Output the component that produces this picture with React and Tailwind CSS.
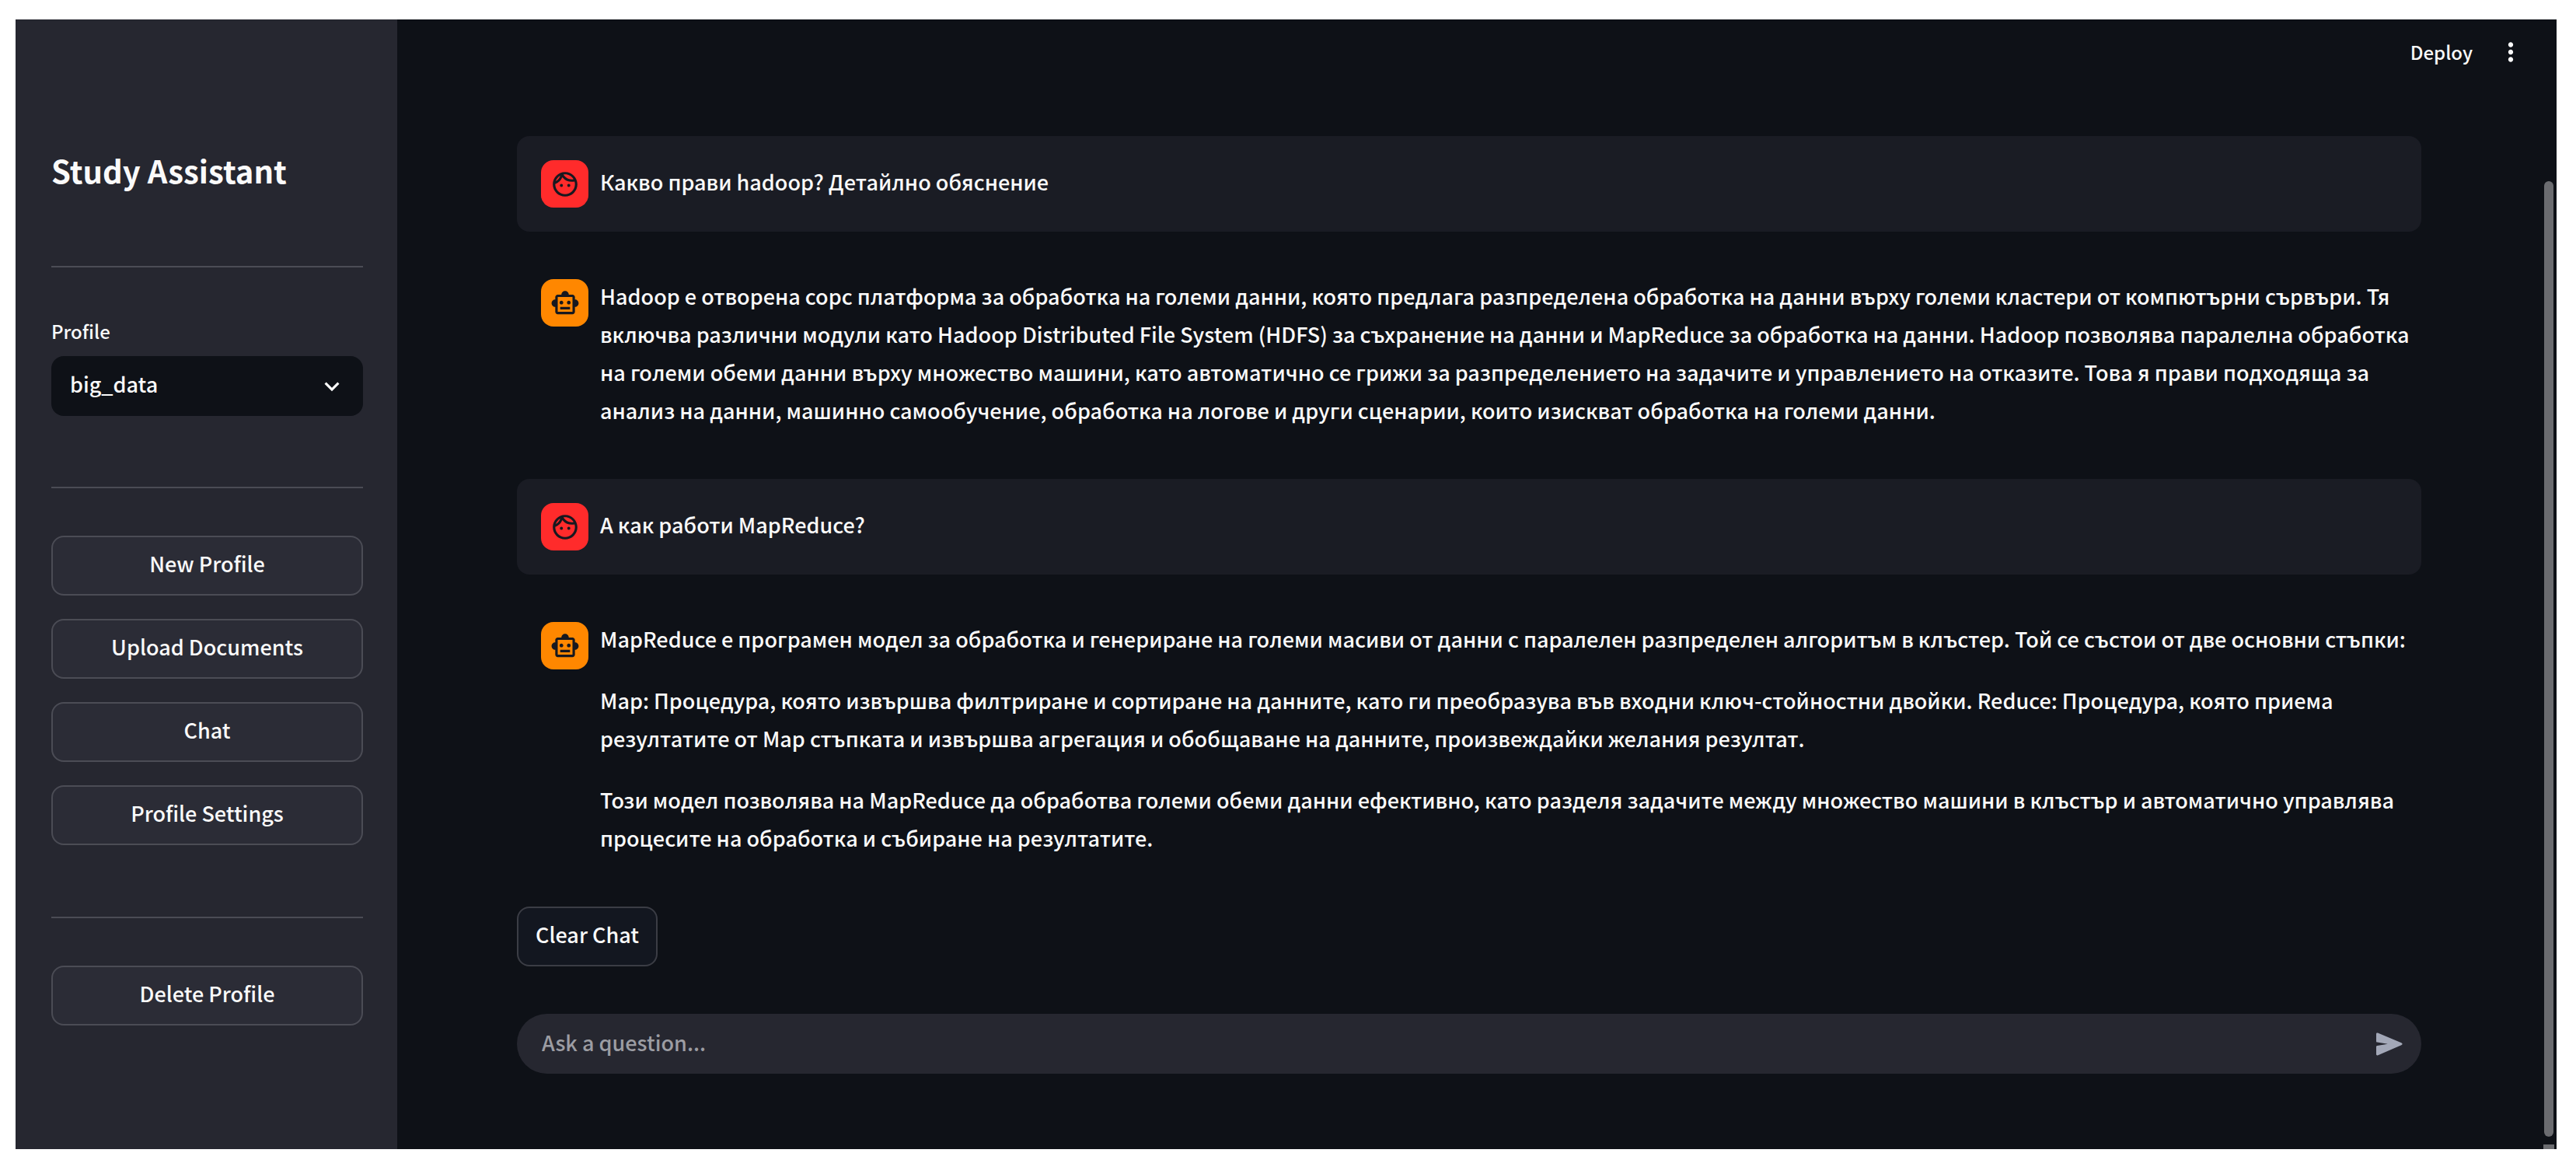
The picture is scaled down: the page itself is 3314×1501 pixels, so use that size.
import React, { useState } from 'react';
import {
  MdKeyboardArrowDown,
  MdMoreVert,
  MdOutlineFace,
  MdOutlineSmartToy,
} from 'react-icons/md';

const messages = [
  {
    role: 'user',
    paragraphs: ['Какво прави hadoop? Детайлно обяснение'],
  },
  {
    role: 'assistant',
    paragraphs: [
      'Hadoop е отворена сорс платформа за обработка на големи данни, която предлага разпределена обработка на данни върху големи кластери от компютърни сървъри. Тя включва различни модули като Hadoop Distributed File System (HDFS) за съхранение на данни и MapReduce за обработка на данни. Hadoop позволява паралелна обработка на големи обеми данни върху множество машини, като автоматично се грижи за разпределението на задачите и управлението на отказите. Това я прави подходяща за анализ на данни, машинно самообучение, обработка на логове и други сценарии, които изискват обработка на големи данни.',
    ],
  },
  {
    role: 'user',
    paragraphs: ['А как работи MapReduce?'],
  },
  {
    role: 'assistant',
    paragraphs: [
      'MapReduce е програмен модел за обработка и генериране на големи масиви от данни с паралелен разпределен алгоритъм в клъстер. Той се състои от две основни стъпки:',
      'Map: Процедура, която извършва филтриране и сортиране на данните, като ги преобразува във входни ключ-стойностни двойки. Reduce: Процедура, която приема резултатите от Map стъпката и извършва агрегация и обобщаване на данните, произвеждайки желания резултат.',
      'Този модел позволява на MapReduce да обработва големи обеми данни ефективно, като разделя задачите между множество машини в клъстър и автоматично управлява процесите на обработка и събиране на резултатите.',
    ],
  },
];

const pages = ['New Profile', 'Upload Documents', 'Chat', 'Profile Settings'];

const SidebarButton = ({ children }) => (
  <button
    type="button"
    className="h-[77px] w-full rounded-2xl border-2 border-[#4b4c55] bg-[#2b2c36] pb-1 text-[27px] font-medium hover:border-[#ff4b4b]"
  >
    {children}
  </button>
);

const Avatar = ({ role }) => {
  const isUser = role === 'user';
  return (
    <div
      className={`flex size-[61px] shrink-0 items-center justify-center rounded-2xl text-[#17181f] ${
        isUser ? 'bg-[#ff2b2b]' : 'bg-[#ff8700]'
      }`}
    >
      {isUser ? <MdOutlineFace size={38} /> : <MdOutlineSmartToy size={38} />}
    </div>
  );
};

const ChatMessage = ({ role, paragraphs }) => (
  <article
    className={`flex items-start gap-[15px] rounded-2xl pt-7 pr-1 pb-[31px] pl-[31px] ${
      role === 'user' ? 'bg-[#1a1c24]' : ''
    }`}
  >
    <div className="pt-[3px]">
      <Avatar role={role} />
    </div>
    <div className="flex min-h-[64px] min-w-0 flex-1 flex-col justify-center gap-[30px] pb-[3px] text-[27px] leading-[49px] font-medium">
      {paragraphs.map((text) => (
        <p key={text}>{text}</p>
      ))}
    </div>
  </article>
);

const SendIcon = () => (
  <svg width="34" height="30" viewBox="0 0 34 30" fill="currentColor" aria-hidden="true">
    <path d="M0 1.8C0 .6 1 .2 2 .5L32.300 13.200c1.800.8 1.800 2.300 0 3.100L2.300 29.200C1 29.700 0 29.200 0 28V18.300c0-.9.4-1.200 1.300-1.400L14.700 14.800 1.300 12.600C.4 12.400 0 12.100 0 11.200Z" />
  </svg>
);

const Divider = () => <hr className="border-t-2 border-[#4b4c55]" />;

const App = () => {
  const [profile, setProfile] = useState('big_data');
  const [question, setQuestion] = useState('');

  return (
    <div className="min-h-screen bg-white pt-[25px] pr-[25px] pb-[21px] pl-5 font-['Noto_Sans_CJK_JP',sans-serif] text-[#fafafa]">
      <div className="flex bg-[#0e1117]">
        {/* Sidebar */}
        <aside className="w-[491px] shrink-0 bg-[#262730] pr-11 pl-[46px]">
          <h1 className="pt-[164px] text-[40px] leading-[60px] font-bold">Study Assistant</h1>
          <div className="pt-[93px]">
            <Divider />
          </div>

          <div className="pt-[59px]">
            <label htmlFor="profile" className="block text-2xl leading-[46px] font-medium">
              Profile
            </label>
            <div className="relative mt-[9px]">
              <select
                id="profile"
                value={profile}
                onChange={(e) => setProfile(e.target.value)}
                className="block h-[77px] w-full appearance-none rounded-2xl bg-[#0e1117] px-6 pb-1 text-[27px] font-medium"
              >
                <option value="big_data">big_data</option>
              </select>
              <MdKeyboardArrowDown
                size={38}
                className="pointer-events-none absolute top-5 right-[21px]"
              />
            </div>
          </div>

          <div className="pt-[91px]">
            <Divider />
          </div>
          <nav className="flex flex-col gap-[30px] pt-[61px]">
            {pages.map((page) => (
              <SidebarButton key={page}>{page}</SidebarButton>
            ))}
          </nav>

          <div className="pt-[92px] pb-[61px]">
            <Divider />
          </div>
          <SidebarButton>Delete Profile</SidebarButton>
        </aside>

        {/* Chat area */}
        <div className="min-w-0 flex-1">
          <header className="flex h-[84px] items-center justify-end gap-[30px] pr-5">
            <button type="button" className="text-2xl font-medium">
              Deploy
            </button>
            <button type="button" aria-label="Main menu">
              <MdMoreVert size={38} />
            </button>
          </header>

          <main className="px-[154px] pt-[66px] pb-[97px]">
            <div className="flex flex-col items-stretch gap-[30px]">
              {messages.map((message, index) => (
                <ChatMessage key={index} {...message} />
              ))}
              <button
                type="button"
                className="h-[77px] self-start rounded-2xl border-2 border-[#3b3d45] bg-[#131720] px-[22px] pb-1 text-[27px] font-medium"
              >
                Clear Chat
              </button>
            </div>

            <form
              onSubmit={(e) => e.preventDefault()}
              className="mt-[61px] flex h-[77px] items-center rounded-full bg-[#262730] pr-6 pl-8"
            >
              <input
                type="text"
                aria-label="Ask a question"
                placeholder="Ask a question..."
                value={question}
                onChange={(e) => setQuestion(e.target.value)}
                className="h-full min-w-0 flex-1 bg-transparent pb-1 text-[27px] font-medium outline-none placeholder:text-[#9c9da3]"
              />
              <button type="submit" aria-label="Send" className="text-[#a3a8b8]">
                <SendIcon />
              </button>
            </form>
          </main>
        </div>

        {/* Scrollbar */}
        <div className="flex w-5 shrink-0 flex-col items-center pt-[208px]" aria-hidden="true">
          <div className="w-3 flex-1 rounded-full bg-[#6b6c70]" />
          <div className="mt-[10px] h-[6px] w-[14px] bg-[#6b6c70]" />
        </div>
      </div>
    </div>
  );
};

export default App;
